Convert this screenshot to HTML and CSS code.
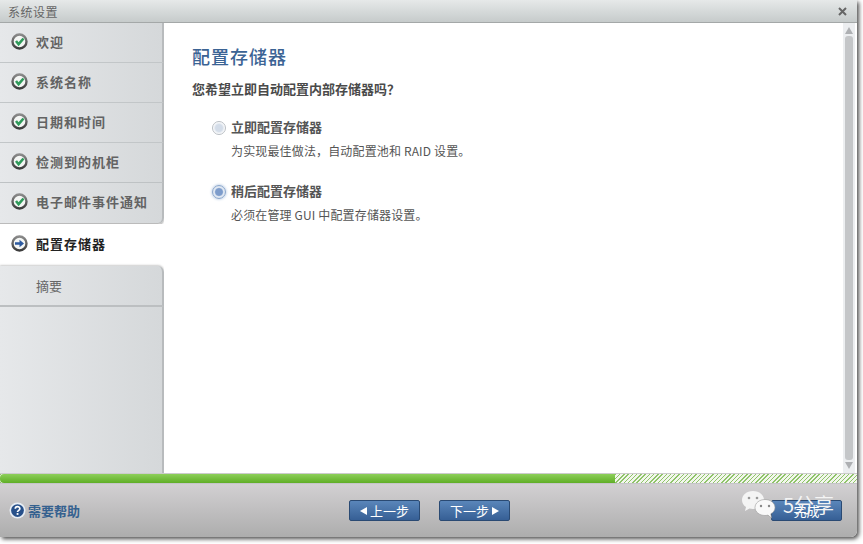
FILE: index.html
```html
<!DOCTYPE html>
<html lang="zh-CN">
<head>
    <meta charset="UTF-8">
    <title>系统设置</title>
    <link rel="stylesheet" href="styles.css">
</head>
<body>
    <svg class="defs" width="0" height="0">
        <defs>
            <linearGradient id="ring" x1="0" y1="0" x2="0" y2="1">
                <stop offset="0" stop-color="#8a8a8a"/>
                <stop offset="1" stop-color="#3c3c3c"/>
            </linearGradient>
        </defs>
    </svg>
    <div class="window">
        <div class="titlebar">
            <span>系统设置</span>
            <svg class="close" width="9" height="9" viewBox="0 0 9 9"><path d="M1 1l7 7M8 1l-7 7" stroke="#666" stroke-width="2"/></svg>
        </div>
        <div class="main">
            <ul class="steps">
                <li class="step done">
                    <svg class="mark" width="17" height="17" viewBox="0 0 17 17"><circle cx="8.5" cy="8.5" r="7" fill="#f4f6f4" stroke="url(#ring)" stroke-width="2.4"/><path d="M5 8l2.600 3.200L12.500 5.500" fill="none" stroke="#2f9a5a" stroke-width="2.600"/></svg>
                    欢迎
                </li>
                <li class="step done">
                    <svg class="mark" width="17" height="17" viewBox="0 0 17 17"><circle cx="8.5" cy="8.5" r="7" fill="#f4f6f4" stroke="url(#ring)" stroke-width="2.4"/><path d="M5 8l2.600 3.200L12.500 5.500" fill="none" stroke="#2f9a5a" stroke-width="2.600"/></svg>
                    系统名称
                </li>
                <li class="step done">
                    <svg class="mark" width="17" height="17" viewBox="0 0 17 17"><circle cx="8.5" cy="8.5" r="7" fill="#f4f6f4" stroke="url(#ring)" stroke-width="2.4"/><path d="M5 8l2.600 3.200L12.500 5.500" fill="none" stroke="#2f9a5a" stroke-width="2.600"/></svg>
                    日期和时间
                </li>
                <li class="step done">
                    <svg class="mark" width="17" height="17" viewBox="0 0 17 17"><circle cx="8.5" cy="8.5" r="7" fill="#f4f6f4" stroke="url(#ring)" stroke-width="2.4"/><path d="M5 8l2.600 3.200L12.500 5.500" fill="none" stroke="#2f9a5a" stroke-width="2.600"/></svg>
                    检测到的机柜
                </li>
                <li class="step done before-active">
                    <svg class="mark" width="17" height="17" viewBox="0 0 17 17"><circle cx="8.5" cy="8.5" r="7" fill="#f4f6f4" stroke="url(#ring)" stroke-width="2.4"/><path d="M5 8l2.600 3.200L12.500 5.500" fill="none" stroke="#2f9a5a" stroke-width="2.600"/></svg>
                    电子邮件事件通知
                </li>
                <li class="step active">
                    <svg class="mark" width="17" height="17" viewBox="0 0 17 17"><circle cx="8.5" cy="8.5" r="7" fill="#f4f6f4" stroke="url(#ring)" stroke-width="2.4"/><path d="M4 7.200h4.500V4.800l4.500 3.700-4.500 3.700V9.800H4z" fill="#2c5aa0"/></svg>
                    配置存储器
                </li>
                <li class="step todo">摘要</li>
                <li class="steps-rest"></li>
            </ul>
            <div class="content">
                <div class="panel">
                    <h1>配置存储器</h1>
                    <p class="question">您希望立即自动配置内部存储器吗？</p>
                    <div class="option">
                        <span class="radio"></span>
                        <div>
                            <div class="option-name">立即配置存储器</div>
                            <div class="option-desc">为实现最佳做法，自动配置池和 RAID 设置。</div>
                        </div>
                    </div>
                    <div class="option">
                        <span class="radio checked"></span>
                        <div>
                            <div class="option-name">稍后配置存储器</div>
                            <div class="option-desc">必须在管理 GUI 中配置存储器设置。</div>
                        </div>
                    </div>
                </div>
                <div class="scrollbar">
                    <span class="arrow up"></span>
                    <span class="thumb"></span>
                    <span class="arrow down"></span>
                </div>
            </div>
        </div>
        <div class="progress"><div class="progress-fill"></div></div>
        <div class="footer">
            <a class="help">
                <svg width="17" height="17" viewBox="0 0 16 16"><circle cx="8" cy="8" r="7.500" fill="#e8eef5"/><circle cx="8" cy="8" r="6" fill="#27508a"/><path d="M5.900 6.400c0-2.600 4.300-2.600 4.300-.1 0 1.600-2.200 1.600-2.200 3.200" fill="none" stroke="#fff" stroke-width="1.600"/><rect x="7.200" y="10.400" width="1.700" height="1.700" fill="#fff"/></svg>
                需要帮助
            </a>
            <div class="nav">
                <button class="btn"><span class="tri left"></span>上一步</button>
                <button class="btn">下一步<span class="tri right"></span></button>
            </div>
            <button class="btn finish">完成</button>
        </div>
    </div>
    <div class="watermark">
        <svg width="36" height="30" viewBox="0 0 36 30">
            <path d="M12 1C5.500 1 1 5 1 10c0 3 1.600 5.500 4 7l-1 4 4.500-2.500c1 .3 2.300.5 3.500.5 6.500 0 11-4 11-9S18.500 1 12 1z" fill="#f4f4f4"/>
            <path d="M24 9.500c-5.500 0-10 3.500-10 8s4.500 8 10 8c1 0 2-.1 3-.4l3.500 3-.7-4.300c2.800-1.500 4.200-3.700 4.200-6.300 0-4.500-4.500-8-10-8z" fill="#f9f9f9" stroke="#999" stroke-width=".6"/>
            <circle cx="8" cy="8" r="1.300" fill="#999"/>
            <circle cx="16" cy="8" r="1.300" fill="#999"/>
            <circle cx="20" cy="16" r="1.200" fill="#888"/>
            <circle cx="28" cy="16" r="1.200" fill="#888"/>
        </svg>
        <span class="watermark-text">5分享</span>
    </div>
</body>
</html>
```

FILE: styles.css
```css
* {
    box-sizing: border-box;
}
html, body {
    margin: 0;
    padding: 0;
    height: 544px;
    overflow: hidden;
    background: #fff;
    font-family: "Noto Sans CJK SC", "Liberation Sans", sans-serif;
}
.defs {
    display: block;
    height: 0;
}
.window {
    width: 857px;
    height: 537px;
    display: flex;
    flex-direction: column;
    border-radius: 0 0 6px 0;
    box-shadow: 2px 2px 4px rgba(0, 0, 0, 0.7);
    overflow: hidden;
    background: #fff;
}
.titlebar {
    height: 23px;
    flex: none;
    display: flex;
    align-items: center;
    justify-content: space-between;
    padding: 0 10px 0 8px;
    background: linear-gradient(to bottom, #e6e9e9, #c6cbcb);
    border-bottom: 1px solid #a4a8a8;
    color: #666;
    font-size: 12px;
    letter-spacing: 0.5px;
}
.close {
    flex: none;
}
.main {
    height: 450px;
    flex: none;
    display: flex;
}
.steps {
    width: 164px;
    flex: none;
    display: flex;
    flex-direction: column;
    list-style: none;
    margin: 0;
    padding: 0;
    background: #fff;
    font-size: 13px;
    letter-spacing: 1px;
    font-weight: 700;
    color: #636363;
}
.step {
    height: 40px;
    flex: none;
    display: flex;
    align-items: center;
    gap: 8px;
    padding: 0 0 3px 11px;
    background: linear-gradient(to right, #e6e8ea, #d5d8da);
    border-bottom: 1px solid #c2c6c8;
    border-right: 2px solid #b8bbbd;
}
.before-active {
    height: 41px;
    border-radius: 0 0 6px 0;
    box-shadow: 0 1px 2px rgba(0, 0, 0, 0.35);
    border-bottom-color: #bbb;
}
.active {
    height: 42px;
    padding-bottom: 3px;
    background: #fff;
    border: 0;
    color: #222;
}
.todo {
    height: 41px;
    padding-left: 36px;
    padding-bottom: 0;
    font-weight: 400;
    letter-spacing: 0;
    color: #666;
    border-radius: 0 6px 0 0;
    border-bottom: 2px solid #bcbfc1;
    box-shadow: 0 -1px 2px rgba(0, 0, 0, 0.2);
}
.steps-rest {
    flex: 1;
    background: linear-gradient(to right, #e6e8ea, #d5d8da);
    border-right: 2px solid #b8bbbd;
}
.mark {
    flex: none;
}
.content {
    flex: 1;
    display: flex;
    min-width: 0;
    background: #fff;
}
.panel {
    flex: 1;
    padding: 20px 0 0 28px;
}
h1 {
    margin: 0 0 11px;
    font-size: 18px;
    line-height: 26px;
    font-weight: 500;
    letter-spacing: 1px;
    color: #3b6394;
}
.question {
    margin: 0 0 19px;
    font-size: 13px;
    line-height: 18px;
    font-weight: 700;
    color: #4a4a4a;
}
.option {
    display: flex;
    gap: 5px;
    margin: 0 0 20px 20px;
}
.radio {
    width: 14px;
    height: 14px;
    margin-top: 4px;
    flex: none;
    border-radius: 50%;
    border: 1px solid #b9bec4;
    background: radial-gradient(circle, #d3dce8 0, #d3dce8 40%, #fff 70%);
}
.radio.checked {
    border-color: #8aa6cb;
    background: radial-gradient(circle, #7d9ccb 0, #7d9ccb 40%, #e4ebf4 55%, #c4d2e6 100%);
    box-shadow: 0 0 3px #9db6d8;
}
.option-name {
    font-size: 13px;
    line-height: 20px;
    font-weight: 700;
    color: #555;
}
.option-desc {
    margin-top: 4px;
    font-size: 12px;
    line-height: 20px;
    letter-spacing: 0.15px;
    color: #555;
}
.scrollbar {
    width: 12px;
    flex: none;
    margin-right: 2px;
    display: flex;
    flex-direction: column;
    align-items: center;
    padding: 4px 0;
    gap: 2px;
    background: #eceef0;
}
.thumb {
    flex: 1;
    width: 8px;
    border-radius: 3px;
    background: #c4c6c8;
}
.arrow {
    flex: none;
    width: 0;
    height: 0;
    border-left: 4px solid transparent;
    border-right: 4px solid transparent;
}
.arrow.up {
    border-bottom: 7px solid #aeb0b3;
}
.arrow.down {
    border-top: 7px solid #aeb0b3;
}
.progress {
    height: 11px;
    flex: none;
    padding: 0;
    background: repeating-linear-gradient(135deg, #8fc46a 0, #8fc46a 1px, #f2f6ec 1px, #f2f6ec 3px);
    border-top: 1px solid #ccc;
    border-bottom: 1px solid #c4c4c8;
}
.progress-fill {
    width: 615px;
    height: 100%;
    border-radius: 4px 0 0 4px;
    background: linear-gradient(to bottom, #8dcf5a, #5fae26);
}
.footer {
    flex: 1;
    display: flex;
    align-items: center;
    padding: 0 15px 0 9px;
    background: linear-gradient(to bottom, #d2d0d2, #adadad);
}
.help {
    width: 340px;
    flex: none;
    display: flex;
    align-items: center;
    gap: 2px;
    font-size: 13px;
    font-weight: 700;
    color: #35618f;
}
.nav {
    flex: 1;
    display: flex;
    gap: 19px;
}
.btn {
    width: 71px;
    height: 21px;
    flex: none;
    display: flex;
    align-items: center;
    justify-content: center;
    gap: 3px;
    padding: 0;
    border: 1px solid #2a4a73;
    border-radius: 2px;
    background: linear-gradient(to bottom, #5a86ba, #365f95);
    color: #fff;
    font-family: inherit;
    font-size: 13px;
}
.tri {
    width: 0;
    height: 0;
    border-top: 4px solid transparent;
    border-bottom: 4px solid transparent;
}
.tri.left {
    border-right: 7px solid #fff;
}
.tri.right {
    border-left: 7px solid #fff;
}
.watermark {
    position: absolute;
    left: 741px;
    top: 490px;
    display: flex;
    align-items: flex-start;
    gap: 6px;
    color: #f4f4f4;
    font-size: 20px;
    line-height: 26px;
}
.watermark-text {
    margin-top: 2px;
}
```
